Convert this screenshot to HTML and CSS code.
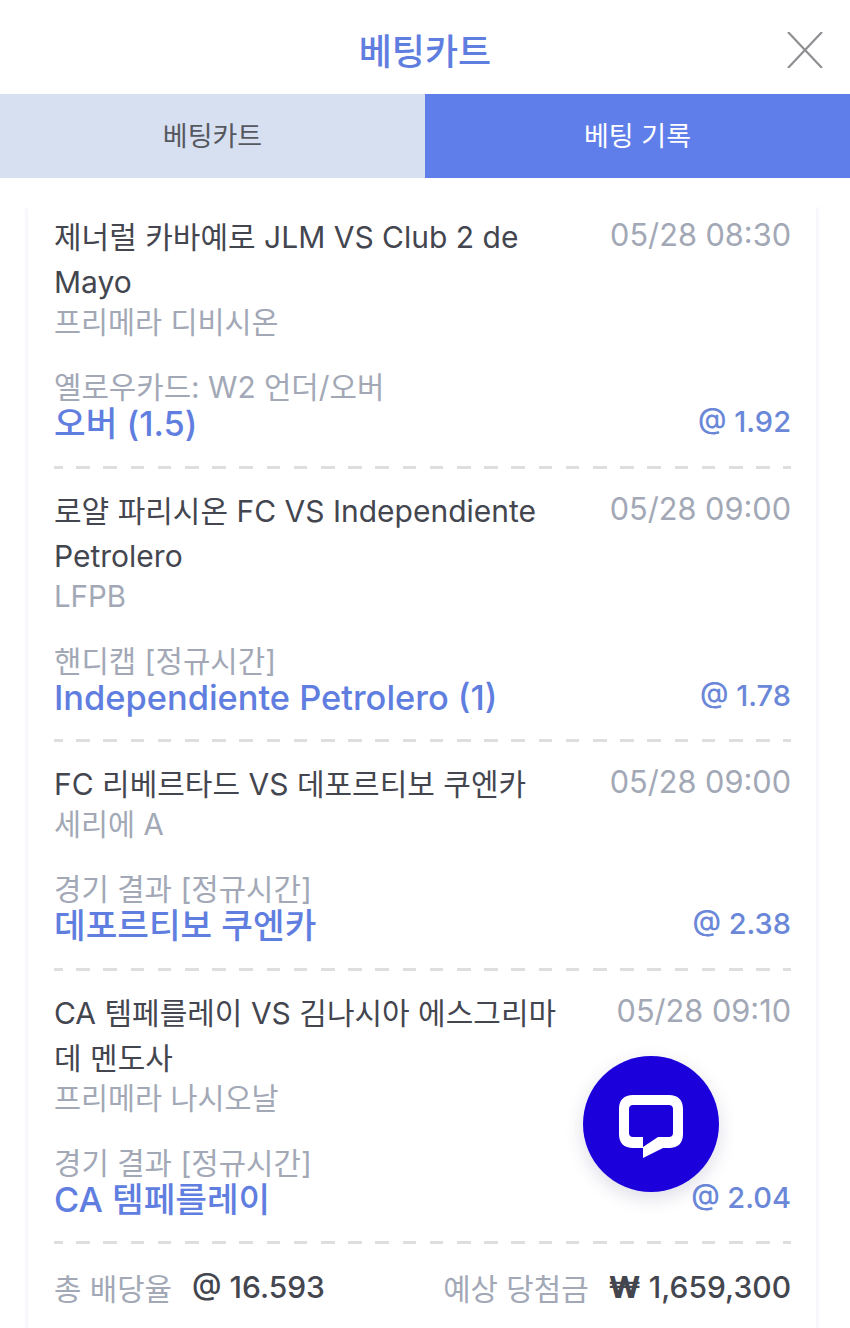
FILE: index.html
```html
<!DOCTYPE html>
<html lang="ko">
<head>
<meta charset="utf-8">
<title>베팅카트</title>
<link rel="stylesheet" href="styles.css">
</head>
<body>
<div class="page">
  <header class="top">
    <h1 class="title">베팅카트</h1>
    <svg class="close" viewBox="0 0 36 36" width="36" height="36" aria-hidden="true"><path d="M1 0 35 36M35 0 1 36" fill="none" stroke="#8f8f93" stroke-width="2.2"/></svg>
  </header>
  <nav class="tabs">
    <div class="tab">베팅카트</div>
    <div class="tab tab-active">베팅 기록</div>
  </nav>
  <main class="card">
    <section class="bet">
      <div class="row-top"><div class="match">제너럴 카바예로 JLM VS Club 2 de Mayo</div><div class="time">05/28 08:30</div></div>
      <div class="league">프리메라 디비시온</div>
      <div class="market">옐로우카드: W2 언더/오버</div>
      <div class="row-pick"><div class="pick">오버 (1.5)</div><div class="odds">@ 1.92</div></div>
    </section>
    <section class="bet">
      <div class="row-top"><div class="match">로얄 파리시온 FC VS Independiente Petrolero</div><div class="time">05/28 09:00</div></div>
      <div class="league">LFPB</div>
      <div class="market">핸디캡 [정규시간]</div>
      <div class="row-pick"><div class="pick">Independiente Petrolero (1)</div><div class="odds">@ 1.78</div></div>
    </section>
    <section class="bet">
      <div class="row-top"><div class="match">FC 리베르타드 VS 데포르티보 쿠엔카</div><div class="time">05/28 09:00</div></div>
      <div class="league">세리에 A</div>
      <div class="market">경기 결과 [정규시간]</div>
      <div class="row-pick"><div class="pick">데포르티보 쿠엔카</div><div class="odds">@ 2.38</div></div>
    </section>
    <section class="bet">
      <div class="row-top"><div class="match">CA 템페를레이 VS 김나시아 에스그리마 데 멘도사</div><div class="time">05/28 09:10</div></div>
      <div class="league">프리메라 나시오날</div>
      <div class="market">경기 결과 [정규시간]</div>
      <div class="row-pick"><div class="pick">CA 템페를레이</div><div class="odds">@ 2.04</div></div>
    </section>
    <footer class="totals">
      <div class="total"><span class="total-label">총 배당율</span><span class="total-value">@ 16.593</span></div>
      <div class="total"><span class="total-label">예상 당첨금</span><span class="total-value"><b class="won">₩</b> 1,659,300</span></div>
    </footer>
  </main>
  <button class="chat" aria-label="채팅">
    <svg viewBox="0 0 64 64" width="64" height="64" aria-hidden="true"><path fill="#fff" fill-rule="evenodd" d="M14 0H50C59 0 64 5 64 14V39C64 48 59 53 50 53H44L24 63V53H14C5 53 0 48 0 39V14C0 5 5 0 14 0ZM14 10C11.500 10 10 11.500 10 14V38C10 40.500 11.500 42 14 42H24V52L39 42H50C52.500 42 54 40.500 54 38V14C54 11.500 52.500 10 50 10Z"/></svg>
  </button>
</div>
</body>
</html>
```
FILE: styles.css
```css
* { box-sizing: border-box; }
html, body { margin: 0; padding: 0; }
body {
  background: #fff;
  font-family: Inter, "Noto Sans CJK KR", "Noto Sans", sans-serif;
  color: #44464f;
}
.page { position: relative; width: 850px; height: 1328px; overflow: hidden; }
.top { position: relative; height: 94px; display: flex; align-items: center; justify-content: center; padding-top: 10px; }
.title { margin: 0; font-size: 36px; font-weight: 500; color: #5f7ee0; line-height: 1; }
.close { position: absolute; right: 27px; top: 32px; }
.tabs { display: flex; height: 84px; }
.tab { flex: 1; display: flex; align-items: center; justify-content: center; padding-bottom: 3px; font-size: 27px; font-weight: 400; background: #d7e0f0; color: #55585f; }
.tab-active { background: #5f7eea; color: #fff; }
.card {
  margin: 29px 34px 0 28px;
  padding: 8px 25px 60px 26px;
  background: #fff;
  box-shadow: 0 0 5px rgba(190, 190, 230, .35);
  clip-path: inset(0 -10px -10px -10px);
}
.bet {
  padding-bottom: 25.500px;
  margin-bottom: 20px;
  background-image: repeating-linear-gradient(90deg, #dedede 0 13.500px, transparent 13.500px 27.200px);
  background-size: calc(100% + 6px) 3px;
  background-position: -5px 100%;
  background-repeat: no-repeat;
}
.row-top { display: flex; justify-content: space-between; align-items: flex-start; }
.match { width: 510px; font-size: 30px; line-height: 45px; color: #44464f; }
.time { font-size: 30.700px; line-height: 40px; color: #a2a8b6; white-space: nowrap; }
.league { font-size: 29.400px; line-height: 35px; color: #a2a8b6; }
.market { margin-top: 29px; font-size: 29.800px; line-height: 36px; color: #a2a8b6; }
.row-pick { display: flex; justify-content: space-between; align-items: flex-start; }
.pick { font-size: 34.400px; line-height: 38px; font-weight: 500; color: #5f7ee0; }
.odds { font-size: 29px; line-height: 34px; font-weight: 500; color: #6a87d8; }
.totals { display: flex; justify-content: space-between; align-items: center; height: 46px; }
.total { display: flex; align-items: center; gap: 20px; }
.total-label { font-size: 29.800px; color: #a2a8b6; }
.total-value { font-size: 30px; font-weight: 500; color: #44464f; }
.won { font-weight: 800; }
.chat {
  position: absolute;
  left: 583px;
  top: 1056px;
  width: 136px;
  height: 136px;
  padding: 6px 0 0;
  border: 0;
  border-radius: 50%;
  background: #1c00dc;
  box-shadow: 0 6px 18px rgba(60, 60, 120, .18);
  display: flex;
  align-items: center;
  justify-content: center;
}
```
